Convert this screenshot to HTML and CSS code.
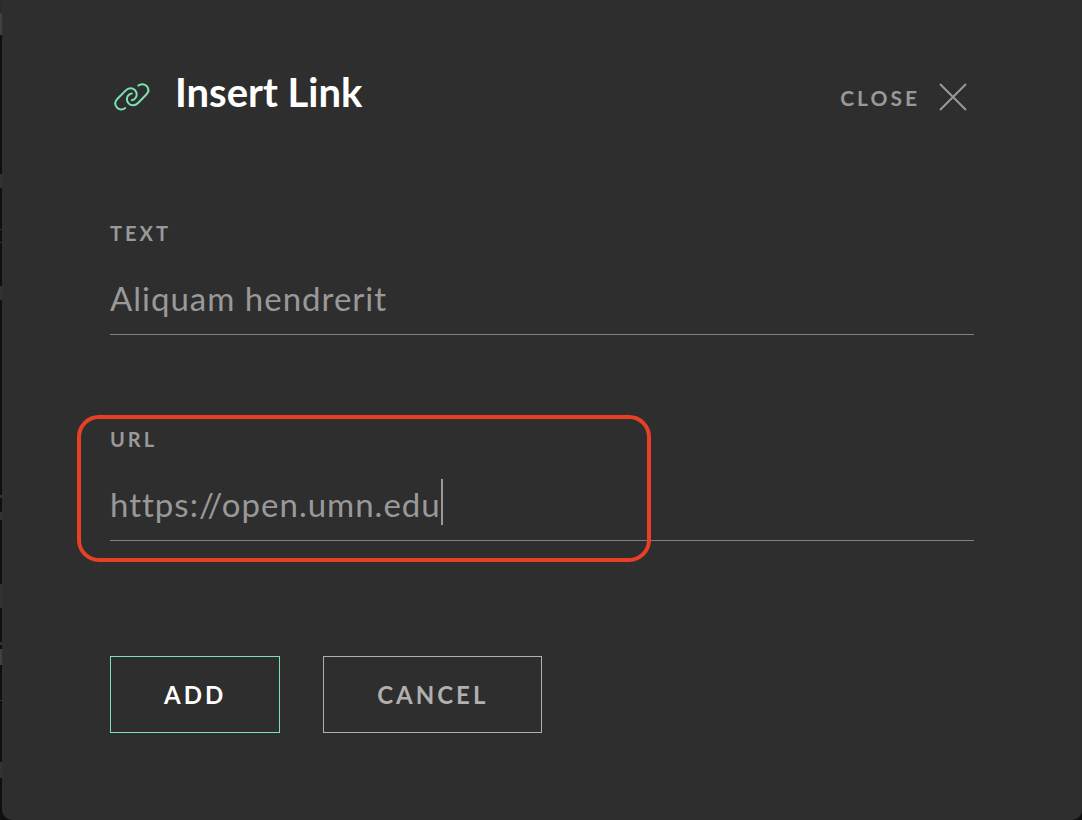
FILE: index.html
```html
<!DOCTYPE html>
<html lang="en">
<head>
    <meta charset="UTF-8">
    <meta name="viewport" content="width=device-width, initial-scale=1.0">
    <title>Insert Link</title>
    <link rel="stylesheet" href="styles.css">
</head>
<body>
    <main class="dialog" role="dialog" aria-labelledby="dialog-title">
        <header class="dialog-header">
            <svg class="link-icon" viewBox="0 0 42 36" aria-hidden="true">
                <defs>
                    <path id="link-half" d="M15.200 29C12.800 31 9 31 6.800 28.400C4.500 25.600 5 22.300 7.500 19.800L15.800 11.400C18.400 8.800 22.300 8.400 24.800 11C27.500 13.800 27.200 17.500 25 19.600C24.200 20.400 23 21 21.800 21.200"/>
                </defs>
                <use href="#link-half"/>
                <use href="#link-half" transform="rotate(180 21.800 17.800)"/>
            </svg>
            <h1 id="dialog-title">Insert Link</h1>
            <button class="close" type="button">
                Close
                <svg class="close-icon" viewBox="0 0 28 28" aria-hidden="true">
                    <path d="M1 1L27 27M27 1L1 27"/>
                </svg>
            </button>
        </header>

        <form class="link-form">
            <div class="field">
                <label for="link-text">Text</label>
                <div class="input-row">
                    <input id="link-text" type="text" value="Aliquam hendrerit">
                </div>
            </div>
            <div class="field highlighted">
                <label for="link-url">URL</label>
                <div class="input-row">
                    <input id="link-url" type="text" value="https://open.umn.edu">
                    <span class="caret"></span>
                </div>
            </div>
            <div class="actions">
                <button class="btn btn-add" type="button">Add</button>
                <button class="btn btn-cancel" type="button">Cancel</button>
            </div>
        </form>
    </main>
</body>
</html>
```
FILE: styles.css
```css
*,
*::after {
    box-sizing: border-box;
}
body {
    margin: 0;
    min-height: 100vh;
    padding-left: 2px;
    display: flex;
    font-family: Lato, sans-serif;
    /* edge of the dimmed page behind the dialog */
    background: linear-gradient(
        #2b2b2b 13px,
        #404040 13px 35px, #0f0f0f 35px 174px,
        #333 174px 188px, #0f0f0f 188px 229px,
        #333 229px 230px, #0f0f0f 230px 242px,
        #333 242px 243px, #0f0f0f 243px 286px,
        #333 286px 300px, #0f0f0f 300px 495px,
        #333 495px 498px, #0f0f0f 498px 512px,
        #333 512px 520px, #0f0f0f 520px 584px,
        #333 584px 608px, #0f0f0f 608px 642px,
        #333 642px 645px, #0f0f0f 645px 649px,
        #404040 649px 665px, #0f0f0f 665px 700px,
        #333 700px 701px, #0f0f0f 701px 762px,
        #333 762px 778px, #0f0f0f 778px);
}
.dialog {
    flex: 1;
    padding: 72px 108px 87px;
    color: #999;
    background: #2e2e2e;
    border-radius: 0 0 10px 10px;
}
.dialog-header {
    display: flex;
    align-items: center;
    height: 50px;
    margin-bottom: 99px;
}
.link-icon {
    width: 42px;
    height: 36px;
    fill: none;
    stroke: #7be3b0;
    stroke-width: 2;
    stroke-linecap: round;
}
h1 {
    margin: 0 auto 10px 23px;
    color: #fff;
    font-size: 40px;
    font-weight: 700;
    line-height: 48px;
}
button {
    padding: 0;
    font-family: inherit;
    font-weight: 700;
    text-transform: uppercase;
    color: inherit;
    background: none;
    border: 0;
}
.close {
    display: flex;
    align-items: center;
    gap: 19px;
    padding-right: 7px;
    font-size: 21px;
    letter-spacing: 3px;
}
.close-icon {
    width: 28px;
    height: 28px;
    fill: none;
    stroke: #999;
    stroke-width: 2;
}
.field {
    position: relative;
    margin-bottom: 92px;
}
label {
    display: block;
    margin-bottom: 28px;
    font-size: 20px;
    font-weight: 700;
    line-height: 24px;
    letter-spacing: 3px;
    text-transform: uppercase;
}
.input-row {
    display: flex;
    padding-bottom: 15px;
    border-bottom: 1px solid #808080;
}
input {
    field-sizing: content;
    height: 46px;
    padding: 4px 0 0;
    font-family: inherit;
    font-size: 33px;
    letter-spacing: 1px;
    color: inherit;
    background: none;
    border: 0;
    outline: 0;
}
.caret {
    width: 2px;
    background: #999;
}
/* red frame around the URL field */
.highlighted::after {
    content: "";
    position: absolute;
    top: -12px;
    bottom: -21px;
    left: -33px;
    width: 574px;
    border: 4px solid #e84026;
    border-radius: 22px;
    pointer-events: none;
}
.actions {
    display: flex;
    gap: 43px;
    padding-top: 23px;
}
.btn {
    height: 77px;
    padding: 0 53px;
    font-size: 24px;
    letter-spacing: 3px;
    border: 1px solid;
}
.btn-add {
    color: #fff;
    border-color: #7be3b0;
}
.btn-cancel {
    color: #b0b0b0;
}
```
